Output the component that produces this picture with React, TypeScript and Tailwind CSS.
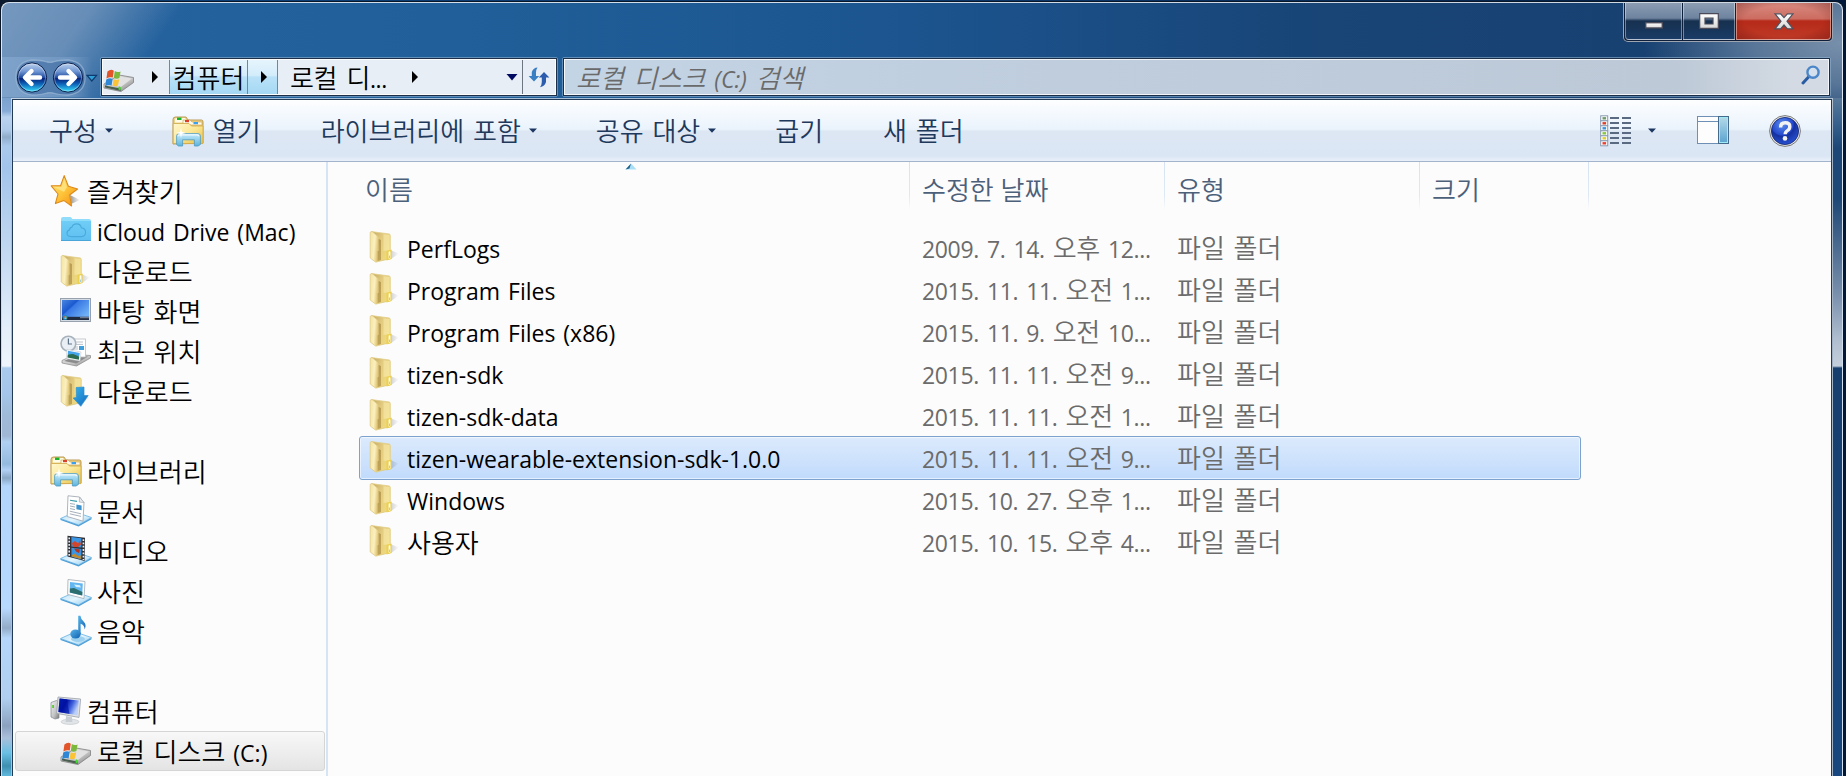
import { Fragment, type ReactNode } from 'react';

/* Korean runs and Latin runs use different faces and sizes. */
function T({ children }: { children: string }) {
  return (
    <span className="whitespace-pre font-['Open_Sans',sans-serif] text-[23px]">
      {children.split(/([가-힣]+(?: [가-힣]+)*)/).map((part, i) =>
        i % 2 ? (
          <span key={i} className="font-['Open_Sans','Noto_Sans_CJK_KR',sans-serif] text-[26px] font-[350]">
            {part}
          </span>
        ) : (
          <Fragment key={i}>{part}</Fragment>
        ),
      )}
    </span>
  );
}

function Gradients() {
  return (
    <svg width="0" height="0" className="absolute">
      <defs>
        <linearGradient id="flap" x1="0" x2="1" y1="0" y2="0.3">
          <stop offset="0" stopColor="#f3e3a0" />
          <stop offset="0.6" stopColor="#fbf0bf" />
          <stop offset="1" stopColor="#e3c776" />
        </linearGradient>
        <linearGradient id="back" x1="0" x2="1" y1="0" y2="0.6">
          <stop offset="0" stopColor="#c4a862" />
          <stop offset="0.5" stopColor="#e3cb80" />
          <stop offset="1" stopColor="#f0da7c" />
        </linearGradient>
        <linearGradient id="lib" x1="0" x2="1" y1="0" y2="1">
          <stop offset="0" stopColor="#fff8d0" />
          <stop offset="0.5" stopColor="#fbe795" />
          <stop offset="1" stopColor="#e5bd45" />
        </linearGradient>
        <linearGradient id="glass" x1="0" x2="0" y1="0" y2="1">
          <stop offset="0" stopColor="#c6ecfb" />
          <stop offset="1" stopColor="#5eb3dd" />
        </linearGradient>
        <linearGradient id="star" x1="0" x2="1" y1="0" y2="1">
          <stop offset="0" stopColor="#ffe98a" />
          <stop offset="0.5" stopColor="#ffc53a" />
          <stop offset="1" stopColor="#f08a10" />
        </linearGradient>
        <linearGradient id="icloud" x1="0" x2="0" y1="0" y2="1">
          <stop offset="0" stopColor="#6fcdf6" />
          <stop offset="1" stopColor="#5fbff0" />
        </linearGradient>
        <linearGradient id="screen" x1="0" x2="1" y1="0" y2="0.7">
          <stop offset="0" stopColor="#4a86e0" />
          <stop offset="0.4" stopColor="#1a58cf" />
          <stop offset="0.45" stopColor="#3878e4" />
          <stop offset="1" stopColor="#6fb0f6" />
        </linearGradient>
        <linearGradient id="crt" x1="0" x2="1" y1="0" y2="0.4">
          <stop offset="0" stopColor="#0c2cb4" />
          <stop offset="0.4" stopColor="#0010a8" />
          <stop offset="0.7" stopColor="#3f62dc" />
          <stop offset="1" stopColor="#bcd0fa" />
        </linearGradient>
        <linearGradient id="plate" x1="0" x2="1" y1="0" y2="1">
          <stop offset="0" stopColor="#b5def6" />
          <stop offset="0.5" stopColor="#e4f5fd" />
          <stop offset="1" stopColor="#8ccaf0" />
        </linearGradient>
        <linearGradient id="metal" x1="0" x2="1" y1="0" y2="1">
          <stop offset="0" stopColor="#f2f2f2" />
          <stop offset="0.6" stopColor="#c2c2c2" />
          <stop offset="1" stopColor="#777" />
        </linearGradient>
        <linearGradient id="arrowBlue" x1="0" x2="1" y1="0" y2="1">
          <stop offset="0" stopColor="#35b4ec" />
          <stop offset="1" stopColor="#1269c0" />
        </linearGradient>
        <linearGradient id="orb" x1="0" x2="0" y1="0" y2="1">
          <stop offset="0" stopColor="#c0d4ee" />
          <stop offset="0.3" stopColor="#6d94d2" />
          <stop offset="0.5" stopColor="#1f4a9e" />
          <stop offset="0.54" stopColor="#06237c" />
          <stop offset="0.72" stopColor="#0e62b8" />
          <stop offset="1" stopColor="#37e4ff" />
        </linearGradient>
        <radialGradient id="help" cx="0.4" cy="0.25" r="0.8">
          <stop offset="0" stopColor="#5c8fee" />
          <stop offset="0.5" stopColor="#2447cc" />
          <stop offset="0.55" stopColor="#14309f" />
          <stop offset="1" stopColor="#2b55d8" />
        </radialGradient>
        <linearGradient id="pane" x1="0" x2="0" y1="0" y2="1">
          <stop offset="0" stopColor="#b5dbe8" />
          <stop offset="1" stopColor="#5aa3cf" />
        </linearGradient>
        <linearGradient id="glyph" x1="0" x2="0" y1="0" y2="1">
          <stop offset="0" stopColor="#ffffff" />
          <stop offset="1" stopColor="#d8d8d8" />
        </linearGradient>
        <linearGradient id="shade" x1="0" x2="1" y1="0" y2="0">
          <stop offset="0" stopColor="#000" stopOpacity="0.4" />
          <stop offset="1" stopColor="#000" stopOpacity="0" />
        </linearGradient>
        <linearGradient id="note" x1="0" x2="1" y1="0" y2="1">
          <stop offset="0" stopColor="#57b4ea" />
          <stop offset="1" stopColor="#0f5fae" />
        </linearGradient>
      </defs>
    </svg>
  );
}

function Folder({ download = false }: { download?: boolean }) {
  return (
    <svg width="32" height="32" viewBox="0 0 32 32" className="shrink-0">
      <path d="M21 19 30 22.5 22 28 10 30Z" fill="url(#shade)" />
      <path d="M2.5.6 20.6 3 21.3 4.5V27.6L7.5 31Z" fill="url(#back)" stroke="#e2cf8a" strokeWidth=".8" />
      <path d="M14.5 3.2 20.6 4V19L14.5 20Z" fill="#fbf0b6" opacity=".5" />
      <path d="M1.2 1.2 3 .5 9 5.5 9.3 8 9 19 8 20 8.2 30.6 6.5 31 1.2 27Z" fill="url(#flap)" stroke="#e0cc86" strokeWidth=".8" />
      <path d="M9.6 8V19.6L8.6 20.6V30L12 29V9Z" fill="#94742e" opacity=".5" />
      {download ? (
        <path d="M16.2 12.5 24 12 24 20.5 28.2 20.5 20.8 31.3 13.2 23 16.4 22.6Z" fill="url(#arrowBlue)" stroke="#2f8fd0" strokeWidth=".7" />
      ) : (
        <>
          <path d="M17.5 20 22.6 18.4V28L17.5 29.5Z" fill="#ecd04f" />
          <rect x="19.6" y="20.2" width="1.8" height="7.6" rx=".9" fill="#fffdf0" />
          <path d="M20.5 24.5v2.6" stroke="#8fc3df" strokeWidth=".8" />
        </>
      )}
    </svg>
  );
}

function LibraryIcon() {
  return (
    <svg width="32" height="32" viewBox="0 0 32 32" className="shrink-0">
      <path d="M1 29V4.5Q1 2 3.5 2H14l2 3h13.5Q31 5 31 7V28Z" fill="#ecd48a" stroke="#b8924a" strokeWidth=".9" />
      <path d="M3 4.5Q3 3 5 3h8l1.5 2.5H12l-1.5 2H3Z" fill="#fffbe6" />
      <rect x="5" y="2.6" width="4.5" height="2.4" fill="#18b32c" />
      <path d="M11 7V5h7l2 2h10v3H11Z" fill="#fffbe6" stroke="#c7a050" strokeWidth=".6" />
      <rect x="13" y="5" width="4" height="2.2" fill="#d8402c" />
      <rect x="21.5" y="7" width="4.5" height="2.2" fill="#3a9ff0" />
      <path d="M1.2 8.5H17l2.5 2.5H31V28.6H1.2Z" fill="url(#lib)" stroke="#d0a848" strokeWidth=".8" />
      <path d="M4.6 29.5V21q0-2.4 2.4-2.4H26q2.4 0 2.4 2.4v8.5L26 31H22.4v-6.2H10.6V31H6.4Z" fill="url(#glass)" stroke="#4c9ac4" strokeWidth=".8" />
      <path d="M6 21.3q0-1.4 1.6-1.4H25q1.8 0 1.8 1.4" stroke="#effaff" strokeWidth="1.1" fill="none" />
      <path d="M9 12.5 9.8 16.8 14 18 9.8 19 9 23.5 8.2 19 4 18 8.2 16.8Z" fill="#fff" />
    </svg>
  );
}

function StarIcon() {
  return (
    <svg width="32" height="32" viewBox="0 0 32 32" className="shrink-0">
      <path d="M20 20 30 25 21 29Z" fill="url(#shade)" />
      <path d="M14.2.6 18.4 11.2 27.6 14 19.6 20 21.6 31 14 25.6 5.4 28.6 8 19 1.2 10.8 10.6 10.6Z" fill="url(#star)" stroke="#dd8a1c" strokeWidth="1.1" strokeLinejoin="round" />
      <path d="M14.2 4 17 12 14 17 4 12 11.6 12Z" fill="#ffe88c" opacity=".75" />
    </svg>
  );
}

function ICloudIcon() {
  return (
    <svg width="32" height="32" viewBox="0 0 32 32" className="shrink-0">
      <path d="M1 26V4q0-2 2-2h7q1 0 1.6 1L12.3 4H29q2 0 2 2V26Z" fill="#8fdcfb" />
      <rect x="1" y="6" width="30" height="20" fill="url(#icloud)" />
      <rect x="1" y="25" width="30" height="1" fill="#4ba6d8" />
      <path d="M11 21.6q-4-.3-4-3.4 0-2.6 2.6-3.3 0-2.4 2.4-2.8.8-3.2 4.6-3.2 4 0 4.8 4 4.2.4 4.2 4.4 0 4-4.2 4.3Z" fill="none" stroke="#4aaadd" strokeWidth="1.1" />
    </svg>
  );
}

function DesktopIcon() {
  return (
    <svg width="32" height="32" viewBox="0 0 32 32" className="shrink-0">
      <rect x=".5" y="3.5" width="30" height="23" fill="#d5dbe2" stroke="#97a2ae" />
      <rect x="2" y="5" width="27" height="17.5" fill="url(#screen)" />
      <rect x="2" y="21.8" width="27" height="3.2" fill="#222c40" />
      <rect x="20" y="21.8" width="9" height="1.4" fill="#6f7c92" />
      <circle cx="5" cy="22.6" r="2.5" fill="#2386b8" />
      <rect x="3.9" y="21.4" width="1.2" height="1.2" fill="#f06830" />
      <rect x="5.2" y="21.4" width="1.2" height="1.2" fill="#8ccf3c" />
      <rect x="3.9" y="22.7" width="1.2" height="1.2" fill="#3fb0f0" />
      <rect x="5.2" y="22.7" width="1.2" height="1.2" fill="#ffd23c" />
    </svg>
  );
}

function RecentIcon() {
  return (
    <svg width="32" height="32" viewBox="0 0 32 32" className="shrink-0">
      <path d="M2 25.5 15 19.5 30.5 20.5 30.5 23 16.5 31 2 28Z" fill="url(#metal)" stroke="#888" strokeWidth=".7" />
      <path d="M4 26 15 21 28 21.6 16.4 28.4Z" fill="#8c8c8c" />
      <rect x="12.5" y="4" width="13" height="18" fill="#fff" stroke="#b8bec6" strokeWidth=".8" />
      <path d="M14 7h9M14 9.4h9M14 12h4M14 14h4" stroke="#a9b4c0" strokeWidth=".8" />
      <rect x="19" y="11" width="5" height="4" fill="#3f9fdc" />
      <circle cx="8.4" cy="8.6" r="7.4" fill="#e9eff4" stroke="#a7b2bc" strokeWidth="1.6" />
      <path d="M8.4 3.5V9H12" stroke="#5e7386" strokeWidth="1.2" fill="none" />
      <path d="M7 14.5 21 17 20 26 6.4 23.5Z" fill="#fff" stroke="#c2c8ce" strokeWidth=".6" />
      <path d="M8 15.8 19.8 17.9 19.2 21.5 7.8 19.5Z" fill="#45a5ec" />
      <path d="M7.8 19.5 13 19 19.2 21.5 18.9 24.7 7.4 22.6Z" fill="#2b6c50" />
    </svg>
  );
}

function Plate({ children }: { children: ReactNode }) {
  return (
    <svg width="32" height="32" viewBox="0 0 32 32" className="shrink-0">
      <path d="M.5 23.5 15 17 31.5 22.5 18.5 30Z" fill="url(#plate)" stroke="#6bb3e2" strokeWidth=".8" />
      <path d="M.5 23.7 18.5 30 31.5 22.7V24.2L18.5 31.6.5 25Z" fill="#4f9fd6" />
      {children}
    </svg>
  );
}

const docIcon = (
  <Plate>
    <path d="M8 .8 19.5 2 24 7.5 23 26.2 7.2 21.5Z" fill="#fff" stroke="#a5acb4" strokeWidth=".9" />
    <path d="M19.5 2 19.3 7 24 7.6Z" fill="#e6ebf0" stroke="#a5acb4" strokeWidth=".7" />
    <path d="M10 5.2 17 6.4" stroke="#3a9aa8" strokeWidth="1.1" />
    <path d="M10 8.5 15 9.3M10 11 15 12M10 13.6 15 14.6M9.8 16.2 21 18.8M9.8 18.8 21 21.4" stroke="#8d9aa8" strokeWidth=".8" />
    <path d="M16.4 9.5 21.6 10.4V15.2L16.4 14.2Z" fill="#3f93cc" />
  </Plate>
);

const videoIcon = (
  <Plate>
    <path d="M7.5.8 25 2.8 24.6 26 7.5 21.6Z" fill="#2e3138" />
    <path d="M11.4 2 21.4 3.2V12.6L11.4 11.4Z" fill="#3a96e4" />
    <path d="M11.4 12.8 21.4 14V24.4L11.4 21.8Z" fill="#3a96e4" />
    <path d="M12 8 15 6 18 8.6 20 5.5 21 9.5 18 12H13Z" fill="#d2452a" />
    <path d="M14 13.6 20 14.4 19 18 16 16.5Z" fill="#b03420" />
    <path d="M12 20 15 18.5 18 21 20.5 20 21 24 12 21.6Z" fill="#c28a2c" />
    <path d="M9.2 2.4V21.6M23.4 4.2V25" stroke="#e8ecf0" strokeWidth="1.6" strokeDasharray="1.8 1.5" />
  </Plate>
);

const photoIcon = (
  <Plate>
    <path d="M8 4.5 25 6.5 24 23.6 7.6 19.4Z" fill="#fdfdfd" stroke="#aab2ba" strokeWidth=".9" />
    <path d="M10 7 22.8 8.6 22.2 20.4 9.8 17.4Z" fill="#63b7f0" />
    <path d="M9.9 13.5 14 13 22.4 17 22.2 20.4 9.8 17.4Z" fill="#2c6e6e" />
    <path d="M14 9.5 20 10.2 21 12.6 16 12Z" fill="#d7eefb" />
  </Plate>
);

const musicIcon = (
  <Plate>
    <ellipse cx="18" cy="24" rx="7" ry="3" fill="#9cd0ef" />
    <ellipse cx="15.5" cy="19" rx="5.2" ry="4.6" fill="url(#note)" />
    <path d="M18.2 18.5V.8L20.4.8Q20.8 4.2 23.6 6.4 27 9.5 24.6 14.4 24.5 9.8 20.6 8.8V19Z" fill="url(#note)" />
  </Plate>
);

function ComputerIcon() {
  return (
    <svg width="32" height="32" viewBox="0 0 32 32" className="shrink-0">
      <path d="M1 7.5 6.5 5.5 9 7V23L5 24 1 22Z" fill="url(#metal)" stroke="#7f868e" strokeWidth=".7" />
      <rect x="2.2" y="10" width="1.8" height="3" fill="#58cc2c" />
      <ellipse cx="20" cy="26.8" rx="9" ry="2.6" fill="#e2e5e8" stroke="#b2b8be" strokeWidth=".5" />
      <path d="M16 21 22 22 22.4 27H15.6Z" fill="#c9ced4" />
      <path d="M8 2 30.6 4 29 22.4 6.6 18.4Z" fill="#dfe2e6" stroke="#9ba2aa" strokeWidth=".8" />
      <path d="M9.6 3.6 28.8 5.4 27.5 20.3 8.4 17Z" fill="url(#crt)" />
      <path d="M9.6 3.6 17 4.3 19.5 19 8.4 17Z" fill="#0012a0" opacity=".6" />
    </svg>
  );
}

function DriveIcon() {
  return (
    <svg width="32" height="32" viewBox="0 0 32 32" className="shrink-0">
      <path d="M1 22 16 13 30.5 15.5 30.5 20.5 18 29.5 1 26Z" fill="url(#metal)" stroke="#808080" strokeWidth=".8" />
      <path d="M4 22 16.5 14.5 29 16.5 17.8 25Z" fill="#e2e2e2" />
      <path d="M2 23.4 17.6 26.6V29L2 25.6Z" fill="#4a5f50" />
      <rect x="15.6" y="24.4" width="2" height="3.8" rx=".8" fill="#3ddc28" />
      <path d="M4.4 9.6Q8 6.6 10.8 8.8L9.8 15.6Q7 14.4 3.4 16.6Z" fill="#e2552a" />
      <path d="M11.8 9Q14.6 11 17.6 9.4L16.4 16Q13.4 17.4 10.8 15.8Z" fill="#7cb83c" />
      <path d="M3.2 17.6Q6.8 15.4 9.6 17L8.6 23.6Q5.8 22.2 2.2 24.2Z" fill="#2f88d6" />
      <path d="M10.6 17.2Q13.2 18.8 16.2 17.2L15 23.6Q12.4 25 9.6 23.6Z" fill="#fbc436" />
    </svg>
  );
}

function Caret({ className = '' }: { className?: string }) {
  return (
    <svg width="8" height="5" viewBox="0 0 8 5" className={`shrink-0 ${className}`}>
      <path d="M0 .4H8L4 4.8Z" fill="#1c3660" />
    </svg>
  );
}

function Chevron() {
  return (
    <svg width="6" height="12" viewBox="0 0 6 12" className="shrink-0">
      <path d="M0 0 6 6 0 12Z" fill="#000" />
    </svg>
  );
}

function NavButtons() {
  return (
    <svg width="86" height="40" viewBox="0 0 86 40" className="shrink-0">
      <path d="M18 3Q27 3 33 5 36 5.6 39 5 45 3 54 3 71 5 71 21 71 36 54 38 45 38 39 36 36 35.4 33 36 27 38 18 38 2 36 2 20 2 5 18 3Z" fill="#2a5b94" fillOpacity=".45" stroke="#a7c0dc" strokeOpacity=".6" strokeWidth="1.3" />
      <circle cx="18" cy="20.5" r="14.6" fill="url(#orb)" stroke="#0c1f4a" strokeWidth="1" />
      <circle cx="54" cy="20.5" r="14.6" fill="url(#orb)" stroke="#0c1f4a" strokeWidth="1" />
      <circle cx="18" cy="20.5" r="13.6" fill="none" stroke="#fff" strokeOpacity=".35" />
      <circle cx="54" cy="20.5" r="13.6" fill="none" stroke="#fff" strokeOpacity=".35" />
      <path d="M17.5 14 11 20.5 17.5 27M12 20.5H26" fill="none" stroke="#fff" strokeWidth="4.4" strokeLinecap="round" strokeLinejoin="round" />
      <path d="M54.5 14 61 20.5 54.5 27M60 20.5H46" fill="none" stroke="#fff" strokeWidth="4.4" strokeLinecap="round" strokeLinejoin="round" />
      <path d="M73 18.4H82.6L77.8 24Z" fill="#2f9fd6" stroke="#0d3a70" strokeWidth="1.2" />
    </svg>
  );
}

const windowButton = 'flex h-full items-center justify-center';

function TitleButtons() {
  return (
    <div className="ml-auto mr-[9px] flex h-[39px] w-[210px] rounded-b-[5px] border border-t-0 border-white/60 bg-[#0d1f3a] px-px pb-px">
      <div className={`${windowButton} w-[57px] rounded-bl-[4px] border border-t-0 border-white/40 bg-[linear-gradient(180deg,#8c9db3_0%,#6d839f_42%,#16304f_50%,#1a3c66_100%)] pt-[9px]`}>
        <svg width="18" height="7">
          <rect x=".75" y=".75" width="16.5" height="5.2" fill="url(#glyph)" stroke="#4a4a58" strokeWidth="1.3" />
        </svg>
      </div>
      <div className={`${windowButton} ml-px w-[52px] border border-t-0 border-white/40 bg-[linear-gradient(180deg,#8c9db3_0%,#6d839f_42%,#16304f_50%,#1a3c66_100%)]`}>
        <svg width="20" height="16">
          <path d="M.7.7H19.3V15.3H.7ZM6 5V11H14V5Z" fill="url(#glyph)" fillRule="evenodd" stroke="#4a4a58" strokeWidth="1.2" />
        </svg>
      </div>
      <div className={`${windowButton} ml-px flex-1 rounded-br-[4px] border border-t-0 border-[#e8b0a4]/70 bg-[radial-gradient(ellipse_at_50%_50%,transparent_60%,rgba(70,0,0,0.35)_100%),linear-gradient(180deg,#d98a80_0%,#cc6c60_44%,#b52a18_50%,#c03a28_100%)]`}>
        <svg width="20" height="17">
          <path d="M1 .8H6.6L10 4.6 13.4.8H19L13 8.2 19 15.8H13.4L10 12 6.6 15.8H1L7 8.2Z" fill="url(#glyph)" stroke="#51505e" strokeWidth="1.2" />
        </svg>
      </div>
    </div>
  );
}

function AddressBar() {
  return (
    <div className="flex h-10 w-[458px] rounded-[2px] border border-[#8fb0d0]/60">
      <div className="flex flex-1 border border-[#1b2f48]">
        <div className="flex flex-1 items-center border border-white/90 bg-[#e8eef6] text-black">
          <div className="flex h-full w-[66px] items-center pt-px">
            <DriveIcon />
          </div>
          <div className="-ml-[17px] flex h-full w-[17px] items-center">
            <Chevron />
          </div>
          <div className="flex h-full w-[79px] items-center justify-center border-x border-[#4a94be] bg-[linear-gradient(180deg,#e6f5fc_0%,#d4edfb_45%,#b9e1f8_50%,#a5d8f4_100%)] pt-[2px] leading-9">
            <T>컴퓨터</T>
          </div>
          <div className="flex h-full w-[30px] items-center border-r border-[#4a94be] bg-[linear-gradient(180deg,#e6f5fc_0%,#d4edfb_45%,#b9e1f8_50%,#a5d8f4_100%)] pl-[13px]">
            <Chevron />
          </div>
          <div className="flex flex-1 items-center pl-[12px] leading-9">
            <span className="pt-[2px] tracking-[-0.4px] [word-spacing:3px]">
              <T>로컬 디...</T>
            </span>
            <div className="ml-[25px]">
              <Chevron />
            </div>
            <svg width="12" height="7" className="ml-auto mr-[4px]">
              <path d="M.5 0H11.5L6 6.4Z" fill="#000a60" />
            </svg>
          </div>
          <div className="flex h-full w-[33px] items-center justify-center border-l border-[#6d7680]">
            <svg width="22" height="22" viewBox="0 0 22 22">
              <path d="M9.5 1.5Q5.4 1.6 3.8 6V10H.6L6 15.6 11.2 10H8V6.5Q8 3.6 9.5 1.5Z" fill="#3a7fc4" />
              <path d="M12 21.2Q16.8 20.4 18 16V11.6H21.4L16 6 10.8 11.6H13.8V16Q13.8 19 12 21.2Z" fill="#2c5cae" />
            </svg>
          </div>
        </div>
      </div>
    </div>
  );
}

function SearchBox() {
  return (
    <div className="ml-1 flex h-10 w-[1269px] rounded-[2px] border border-[#8fb0d0]/60">
      <div className="flex flex-1 border border-[#1b2f48]">
        <div className="flex flex-1 items-center border border-white/80 bg-[linear-gradient(90deg,#c3d4e5_0%,#bfcddd_40%,#bdc9d7_88%,#d3dae3_97%)] pl-[11px] pr-[7px] leading-9 text-[#6a6a6a]">
          <span className="pt-[3px] italic [word-spacing:3px]">
            <T>로컬 디스크 (C:) 검색</T>
          </span>
          <svg width="20" height="20" viewBox="0 0 20 20" className="mb-1 ml-auto">
            <path d="M2 18 8 11.5" stroke="#2a5ca4" strokeWidth="3" strokeLinecap="round" />
            <circle cx="12" cy="7.2" r="5.6" fill="#d5e4f3" fillOpacity=".6" stroke="#4a86c8" strokeWidth="2.4" />
          </svg>
        </div>
      </div>
    </div>
  );
}

function Toolbar() {
  const swatches = ['#6f9a6c', '#e03c28', '#3c94e0', '#84c83c', '#e0d030', '#ea4030'];
  return (
    <div className="flex h-[62px] shrink-0 items-center border-b border-[#a3b3cb] bg-[linear-gradient(180deg,#fdfeff_0%,#eaf3fc_48%,#dde7f4_51%,#dbe6f4_92%,#e9f0fa_100%)] pl-[36px] pr-[30px] leading-[60px] text-[#1e395b]">
      <span className="pt-[2px]">
        <T>구성</T>
      </span>
      <Caret className="ml-2" />
      <div className="ml-[59px]">
        <LibraryIcon />
      </div>
      <span className="ml-[9px] pt-[2px]">
        <T>열기</T>
      </span>
      <span className="ml-[60px] pt-[2px] [word-spacing:2px]">
        <T>라이브러리에 포함</T>
      </span>
      <Caret className="ml-[8px]" />
      <span className="ml-[59px] pt-[2px] [word-spacing:2px]">
        <T>공유 대상</T>
      </span>
      <Caret className="ml-[8px]" />
      <span className="ml-[59px] pt-[2px]">
        <T>굽기</T>
      </span>
      <span className="ml-[60px] pt-[2px] [word-spacing:2px]">
        <T>새 폴더</T>
      </span>
      <svg width="32" height="32" viewBox="0 0 32 32" className="ml-auto">
        {swatches.map((c, i) => (
          <g key={c}>
            <rect x=".7" y={0.8 + i * 5} width="7" height="5" fill="#fff" stroke="#8a9ab0" strokeWidth="1" />
            <rect x="2.5" y={2.1 + i * 5} width="3.6" height="2.4" fill={c} />
            <rect x="10" y={2 + i * 5} width="9" height="2" fill="#5a6a80" />
            <rect x="22" y={2 + i * 5} width="9" height="2" fill="#5a6a80" />
          </g>
        ))}
      </svg>
      <Caret className="ml-4" />
      <svg width="33" height="29" viewBox="0 0 33 29" className="ml-[41px]">
        <rect x=".5" y=".5" width="31" height="27" fill="#fdfdfd" stroke="#6f8fb4" />
        <path d="M1 5.5H22" stroke="#6f8fb4" />
        <rect x="21.5" y=".5" width="10" height="27" fill="url(#pane)" stroke="#466a8c" />
        <rect x="22.5" y="1.5" width="8" height="25" fill="none" stroke="#9eeaf6" />
      </svg>
      <svg width="34" height="34" viewBox="0 0 34 34" className="-mr-px ml-[38px]">
        <circle cx="17" cy="17" r="15.4" fill="#e8e8e8" stroke="#7a7a7a" strokeWidth="1" />
        <circle cx="17" cy="17" r="13.6" fill="url(#help)" stroke="#12246e" strokeWidth=".8" />
        <path d="M12.6 13.4Q12.6 8.8 17.2 8.8 21.8 8.8 21.8 12.6 21.8 15.2 19.4 16.6 17.2 17.9 17.2 20.2" fill="none" stroke="#f2f2f2" strokeWidth="3.4" />
        <circle cx="17" cy="24.4" r="2.3" fill="#f2f2f2" />
      </svg>
    </div>
  );
}

type NavItem = { label: string; icon: ReactNode; root?: boolean; active?: boolean };

const navGroups: NavItem[][] = [
  [
    { label: '즐겨찾기', icon: <StarIcon />, root: true },
    { label: 'iCloud Drive (Mac)', icon: <ICloudIcon /> },
    { label: '다운로드', icon: <Folder /> },
    { label: '바탕 화면', icon: <DesktopIcon /> },
    { label: '최근 위치', icon: <RecentIcon /> },
    { label: '다운로드', icon: <Folder download /> },
  ],
  [
    { label: '라이브러리', icon: <LibraryIcon />, root: true },
    { label: '문서', icon: docIcon },
    { label: '비디오', icon: videoIcon },
    { label: '사진', icon: photoIcon },
    { label: '음악', icon: musicIcon },
  ],
  [
    { label: '컴퓨터', icon: <ComputerIcon />, root: true },
    { label: '로컬 디스크 (C:)', icon: <DriveIcon />, active: true },
  ],
];

function Sidebar() {
  return (
    <div className="flex w-[315px] shrink-0 flex-col gap-10 border-r-2 border-[#d6e5f5] pl-[2px] pr-px pt-[9px]">
      {navGroups.map((group, i) => (
        <div key={i}>
          {group.map((item, j) => (
            <div
              key={j}
              className={`flex h-10 items-center gap-[5px] rounded-[3px] border leading-[38px] [word-spacing:2px] ${
                item.active ? 'border-[#d5d5d5] bg-[linear-gradient(180deg,#f8f8f8,#e4e4e4)]' : 'border-transparent'
              } ${item.root ? 'pl-[34px]' : 'pl-[44px]'}`}
            >
              {item.icon}
              <span className="pt-[2px]">
                <T>{item.label}</T>
              </span>
            </div>
          ))}
        </div>
      ))}
    </div>
  );
}

const files = [
  ['PerfLogs', '2009. 7. 14. 오후 12...'],
  ['Program Files', '2015. 11. 11. 오전 1...'],
  ['Program Files (x86)', '2015. 11. 9. 오전 10...'],
  ['tizen-sdk', '2015. 11. 11. 오전 9...'],
  ['tizen-sdk-data', '2015. 11. 11. 오전 1...'],
  ['tizen-wearable-extension-sdk-1.0.0', '2015. 11. 11. 오전 9...'],
  ['Windows', '2015. 10. 27. 오후 1...'],
  ['사용자', '2015. 10. 15. 오후 4...'],
];

function HeaderCell({ label, className }: { label: string; className: string }) {
  return (
    <div className={`flex h-full ${className}`}>
      <span className="pt-[8px]">
        <T>{label}</T>
      </span>
      <div className="ml-auto w-px bg-[linear-gradient(180deg,#d5e3f2_0%,#dfe9f5_70%,transparent_100%)]" />
    </div>
  );
}

function FileList() {
  return (
    <div className="flex flex-1 flex-col">
      <div className="relative flex h-[48px] leading-[40px] text-[#4c607a]">
        <svg width="12" height="7" className="absolute left-[297px] top-px">
          <path d="M6 .5 11.5 6.5H.5Z" fill="#a9def5" />
          <path d="M6 .5.5 6.5 4.5 5.6Z" fill="#1f5f8c" />
        </svg>
        <HeaderCell label="이름" className="w-[582px] pl-[37px]" />
        <HeaderCell label="수정한 날짜" className="w-[255px] pl-[12px]" />
        <HeaderCell label="유형" className="w-[255px] pl-[12px]" />
        <HeaderCell label="크기" className="w-[169px] pl-[12px]" />
      </div>
      <div className="mt-[16px] w-[1253px] pl-[31px]">
        {files.map(([name, date], i) => (
          <div
            key={name}
            className={`-mb-[2px] flex h-[44px] items-center rounded-[3px] border leading-[42px] text-[#6b6b6b] ${
              i === 5
                ? 'border-[#7da2ce] bg-[linear-gradient(180deg,#dceafc,#c1dbfc)] shadow-[inset_0_0_0_1px_rgba(255,255,255,0.55)]'
                : 'border-transparent'
            }`}
          >
            <div className="flex w-[550px] items-center pl-[9px] text-black">
              <div className="mb-[2px] mr-[6px]">
                <Folder />
              </div>
              <span className="pt-[2px] [word-spacing:2px]">
                <T>{name}</T>
              </span>
            </div>
            <span className="w-[255px] pl-[12px] tracking-[-0.35px] [word-spacing:2.4px]">
              <T>{date}</T>
            </span>
            <span className="pl-[12px] [word-spacing:2px]">
              <T>파일 폴더</T>
            </span>
          </div>
        ))}
      </div>
    </div>
  );
}

export default function App() {
  return (
    <div className="h-[776px] w-[1846px] overflow-hidden bg-[linear-gradient(90deg,#0b1a2e_0%,#0c4079_10%,#0a3568_60%,#011838_100%)] pl-px pr-[3px] pt-[2px] text-[23px]">
      <Gradients />
      <div className="flex h-[774px] w-[1842px] flex-col overflow-hidden rounded-t-[8px] border border-b-0 border-white/80 bg-[linear-gradient(125deg,rgba(126,158,194,0.9)_0px,rgba(120,153,190,0.8)_75px,rgba(110,145,185,0)_150px),radial-gradient(ellipse_200px_90px_at_1841px_40px,rgba(125,148,174,0.95)_0%,rgba(110,136,166,0.75)_45%,transparent_100%),linear-gradient(90deg,#2663a0_0%,#205f99_25%,#1c5590_48%,#184476_72%,#173f6e_100%)] shadow-[0_0_0_1px_#0a1626]">
        <TitleButtons />
        <div className="mt-[15px] flex shrink-0 bg-[linear-gradient(90deg,rgba(132,168,208,0.75)_0px,rgba(120,158,200,0.6)_70px,transparent_90px)] pl-[12px]">
          <NavButtons />
          <AddressBar />
          <SearchBox />
        </div>
        <div className="flex min-h-0 flex-1 pt-px">
          <div className="w-[9px] shrink-0 bg-[linear-gradient(180deg,#7ba1cd_0px,#86aad6_13px,#b9d2ef_19px,#aecaea_32px,#8facc9_39px,#a9c9ec_48px,#a3c4ea_70px,#bdd5f0_140px,#e3eefa_230px,#edf4fc_268px,#a9caec_270px,#a5c6ea_295px,#9fb9d8_318px,#a0b8d5_338px,#b0d0f2_344px,#94badd_366px,#b0d0f4_372px,#8aa7c6_380px,#b3d5fb_388px,#b8d9fe_510px,#93abc8_530px,#b5d6fa_540px,#b0cff0_600px,#8ba2bf_628px,#a9bfda_640px,#68bfe3_655px,#3e8eb0_668px,#5db6da_677px)]" />
          <div className="flex min-w-0 flex-1 border border-b-0 border-white/60">
            <div className="flex min-w-0 flex-1 flex-col border border-b-0 border-[#233a56] bg-[#fcfcfc]">
              <Toolbar />
              <div className="flex min-h-0 flex-1">
                <Sidebar />
                <FileList />
              </div>
            </div>
          </div>
          <div className="w-[9px] shrink-0 bg-[linear-gradient(180deg,#587999_0px,#38618d_25px,#1c4777_50px,#1d4776_100px,#4c6b90_150px,#7d93af_200px,#aebdcf_240px,#c4cfdc_268px,#173f6e_270px,#17477e_677px)]" />
        </div>
      </div>
    </div>
  );
}
